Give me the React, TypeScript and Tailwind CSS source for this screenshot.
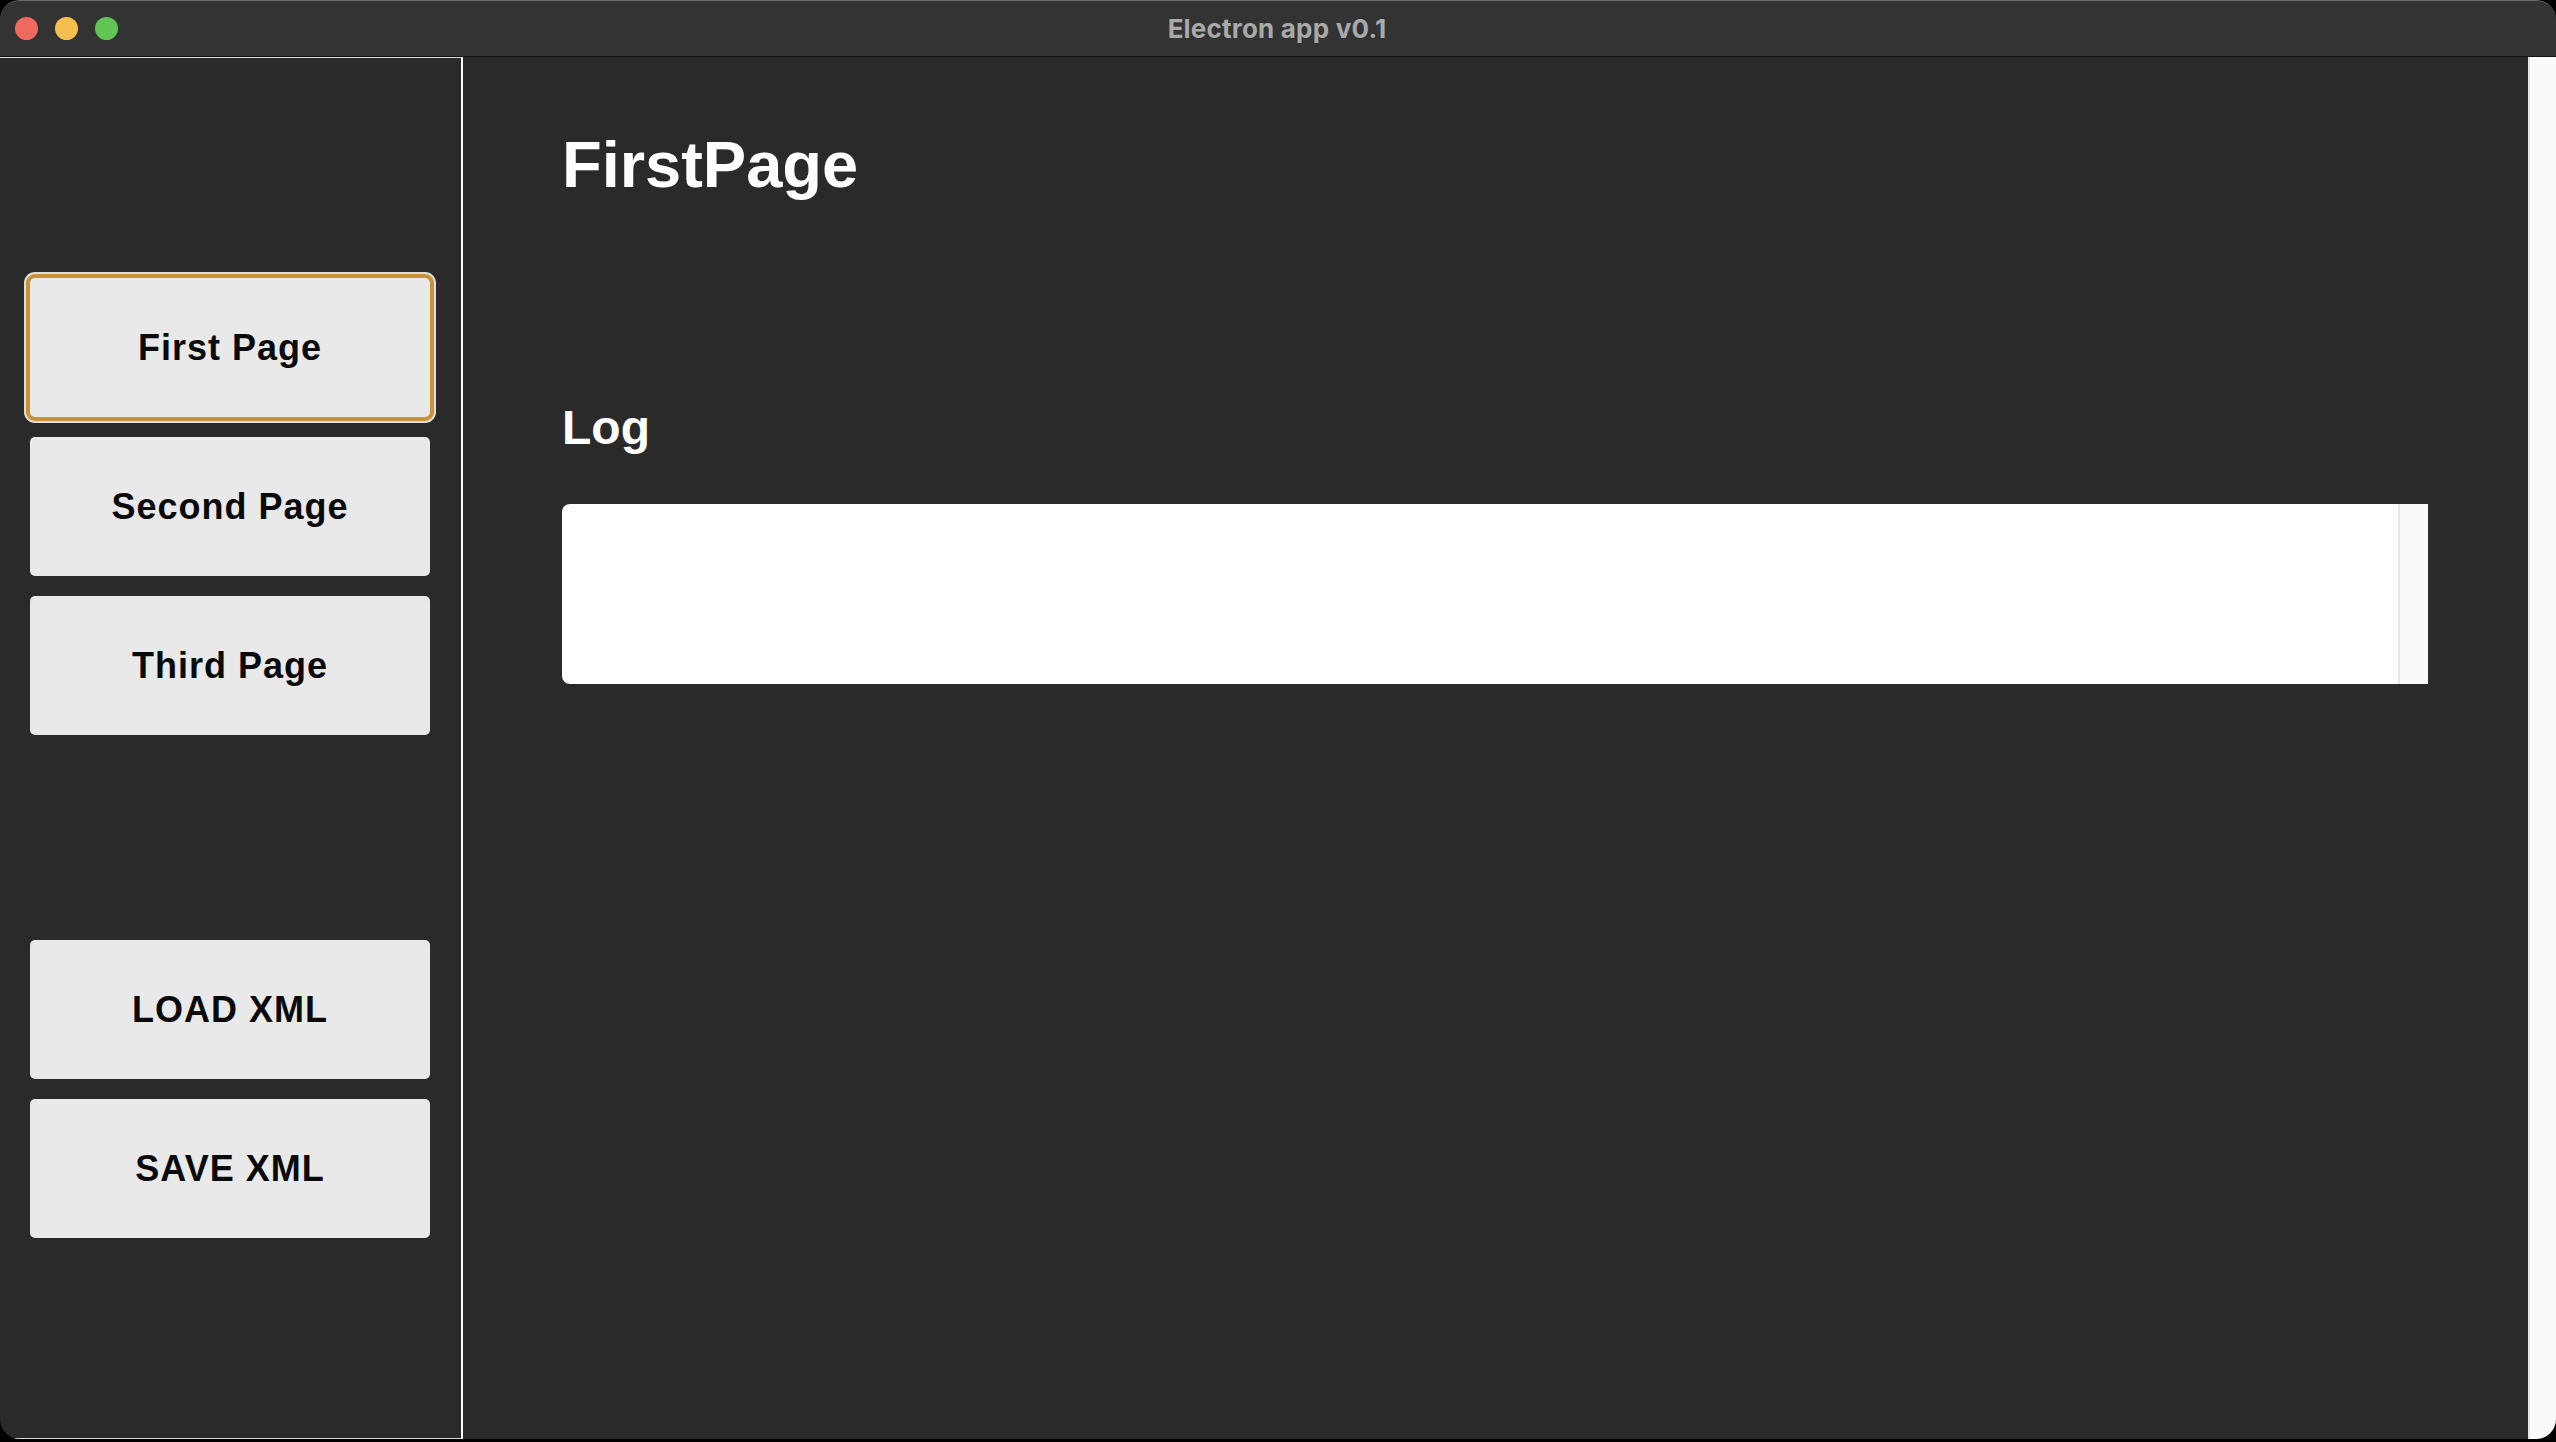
const pages = ["First Page", "Second Page", "Third Page"];
const fileActions = ["LOAD XML", "SAVE XML"];

function SideButton({ label, active }: { label: string; active?: boolean }) {
  return (
    <button
      className={
        "h-[139px] w-[400px] rounded-[5px] bg-[#e9e9e9] text-[36px] font-bold leading-none tracking-[1px] text-[#0a0a0a] " +
        (active ? "shadow-[0_0_0_4px_#cc9136,0_0_0_6px_#dedede]" : "")
      }
    >
      {label}
    </button>
  );
}

export default function App() {
  return (
    <div
      className="h-[1442px] w-[2556px] overflow-hidden bg-black"
      style={{ fontFamily: '"Liberation Sans", Arial, sans-serif' }}
    >
      <div className="flex h-[1439px] flex-col overflow-hidden rounded-[20px] border-t border-[#6b6b6b] bg-[#2a2a2a]">
        {/* Title bar */}
        <div className="relative flex h-[56px] shrink-0 items-center justify-center border-b border-[#141414] bg-[#333333]">
          <div className="absolute left-[15px] top-[16px] flex gap-[17px]">
            <span className="h-[23px] w-[23px] rounded-full bg-[#ee6a5f]" />
            <span className="h-[23px] w-[23px] rounded-full bg-[#f5bf4f]" />
            <span className="h-[23px] w-[23px] rounded-full bg-[#61c554]" />
          </div>
          <span
            className="pr-[2px] text-[26px] font-bold tracking-[0.2px] text-[#a9a9a9]"
            style={{ fontFamily: "Inter, 'Liberation Sans', sans-serif" }}
          >
            Electron app v0.1
          </span>
        </div>

        <div className="flex min-h-0 flex-1">
          {/* Sidebar */}
          <aside className="flex w-[463px] shrink-0 flex-col border-y border-r-2 border-y-[#d8d8d8] border-r-white pl-[30px] pt-[220px]">
            <div className="flex flex-col gap-[20px]">
              {pages.map((p, i) => (
                <SideButton key={p} label={p} active={i === 0} />
              ))}
            </div>
            <div className="mt-[205px] flex flex-col gap-[20px]">
              {fileActions.map((a) => (
                <SideButton key={a} label={a} />
              ))}
            </div>
          </aside>

          {/* Main */}
          <main className="flex flex-1 flex-col pl-[99px] pr-[100px] pt-[75px]">
            <h1 className="text-[65px] font-bold leading-none text-white">FirstPage</h1>
            <h2 className="mt-[207px] text-[48px] font-bold leading-none text-white">Log</h2>
            <div className="mt-[52px] flex h-[180px] overflow-hidden rounded-l-[8px] bg-white">
              <div className="flex-1" />
              <div className="w-[30px] border-l-2 border-[#e8e8e8] bg-[#f9f9f9]" />
            </div>
          </main>

          {/* Page scrollbar track */}
          <div className="w-[28px] shrink-0 border-l-2 border-[#e6e6e6] bg-[#fafafa]" />
        </div>
      </div>
    </div>
  );
}
